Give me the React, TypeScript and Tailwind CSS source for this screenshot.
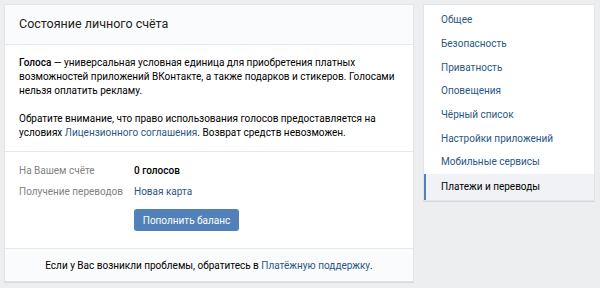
const menu = [
  "Общее",
  "Безопасность",
  "Приватность",
  "Оповещения",
  "Чёрный список",
  "Настройки приложений",
  "Мобильные сервисы",
  "Платежи и переводы",
];

export default function App() {
  return (
    <div className="w-[600px] h-[288px] bg-[#edeef0] flex items-start gap-[9px] pl-[4px] pt-[4px] font-['Roboto',sans-serif] text-[10px] text-black overflow-hidden">
      {/* Main panel */}
      <div className="w-[410px] h-[278px] bg-white border border-[#e3e4e8] shadow-[0_1px_0_0_#d7d8db] flex flex-col">
        <div className="h-[40px] shrink-0 bg-[#fafbfc] border-b border-[#e7e8ec] flex items-center px-[14px] text-[12.5px] text-[#222]">
          Состояние личного счёта
        </div>

        <div className="px-[14px] pt-[11px] pb-[11px] leading-[14px] border-b border-[#e7e8ec]">
          <p>
            <b className="font-medium">Голоса</b> — универсальная условная единица для приобретения платных
            возможностей приложений ВКонтакте, а также подарков и стикеров. Голосами нельзя оплатить рекламу.
          </p>
          <p className="mt-[14px]">
            Обратите внимание, что право использования голосов предоставляется на условиях{" "}
            <span className="text-[#2a5885]">Лицензионного соглашения</span>. Возврат средств невозможен.
          </p>
        </div>

        <div className="flex-1 px-[14px] pt-[8px] whitespace-nowrap">
          <div className="flex h-[21px] items-center">
            <div className="w-[115px] text-[#828282]">На Вашем счёте</div>
            <div className="font-medium">0 голосов</div>
          </div>
          <div className="flex h-[21px] items-center">
            <div className="w-[115px] text-[#828282]">Получение переводов</div>
            <div className="text-[#2a5885]">Новая карта</div>
          </div>
          <div className="pl-[115px] pt-[7px]">
            <button className="w-[105px] h-[22px] rounded-[3px] bg-[#5181b8] text-white text-[10px]">
              Пополнить баланс
            </button>
          </div>
        </div>

        <div className="h-[33px] shrink-0 bg-[#fafbfc] border-t border-[#e7e8ec] flex items-center justify-center whitespace-nowrap">
          Если у Вас возникли проблемы, обратитесь в&nbsp;
          <span className="text-[#2a5885]">Платёжную поддержку</span>.
        </div>
      </div>

      {/* Right menu */}
      <div className="w-[172px] bg-white border border-[#e3e4e8] shadow-[0_1px_0_0_#d7d8db] pt-[3px] whitespace-nowrap">
        {menu.map((item, i) => {
          const active = i === menu.length - 1;
          return (
            <div
              key={item}
              className={
                active
                  ? "h-[26px] flex items-center pl-[15px] border-l-2 border-[#5181b8] bg-[#f0f2f5] text-black"
                  : "h-[23.7px] flex items-center pl-[17px] text-[#2a5885]"
              }
            >
              {item}
            </div>
          );
        })}
      </div>
    </div>
  );
}
